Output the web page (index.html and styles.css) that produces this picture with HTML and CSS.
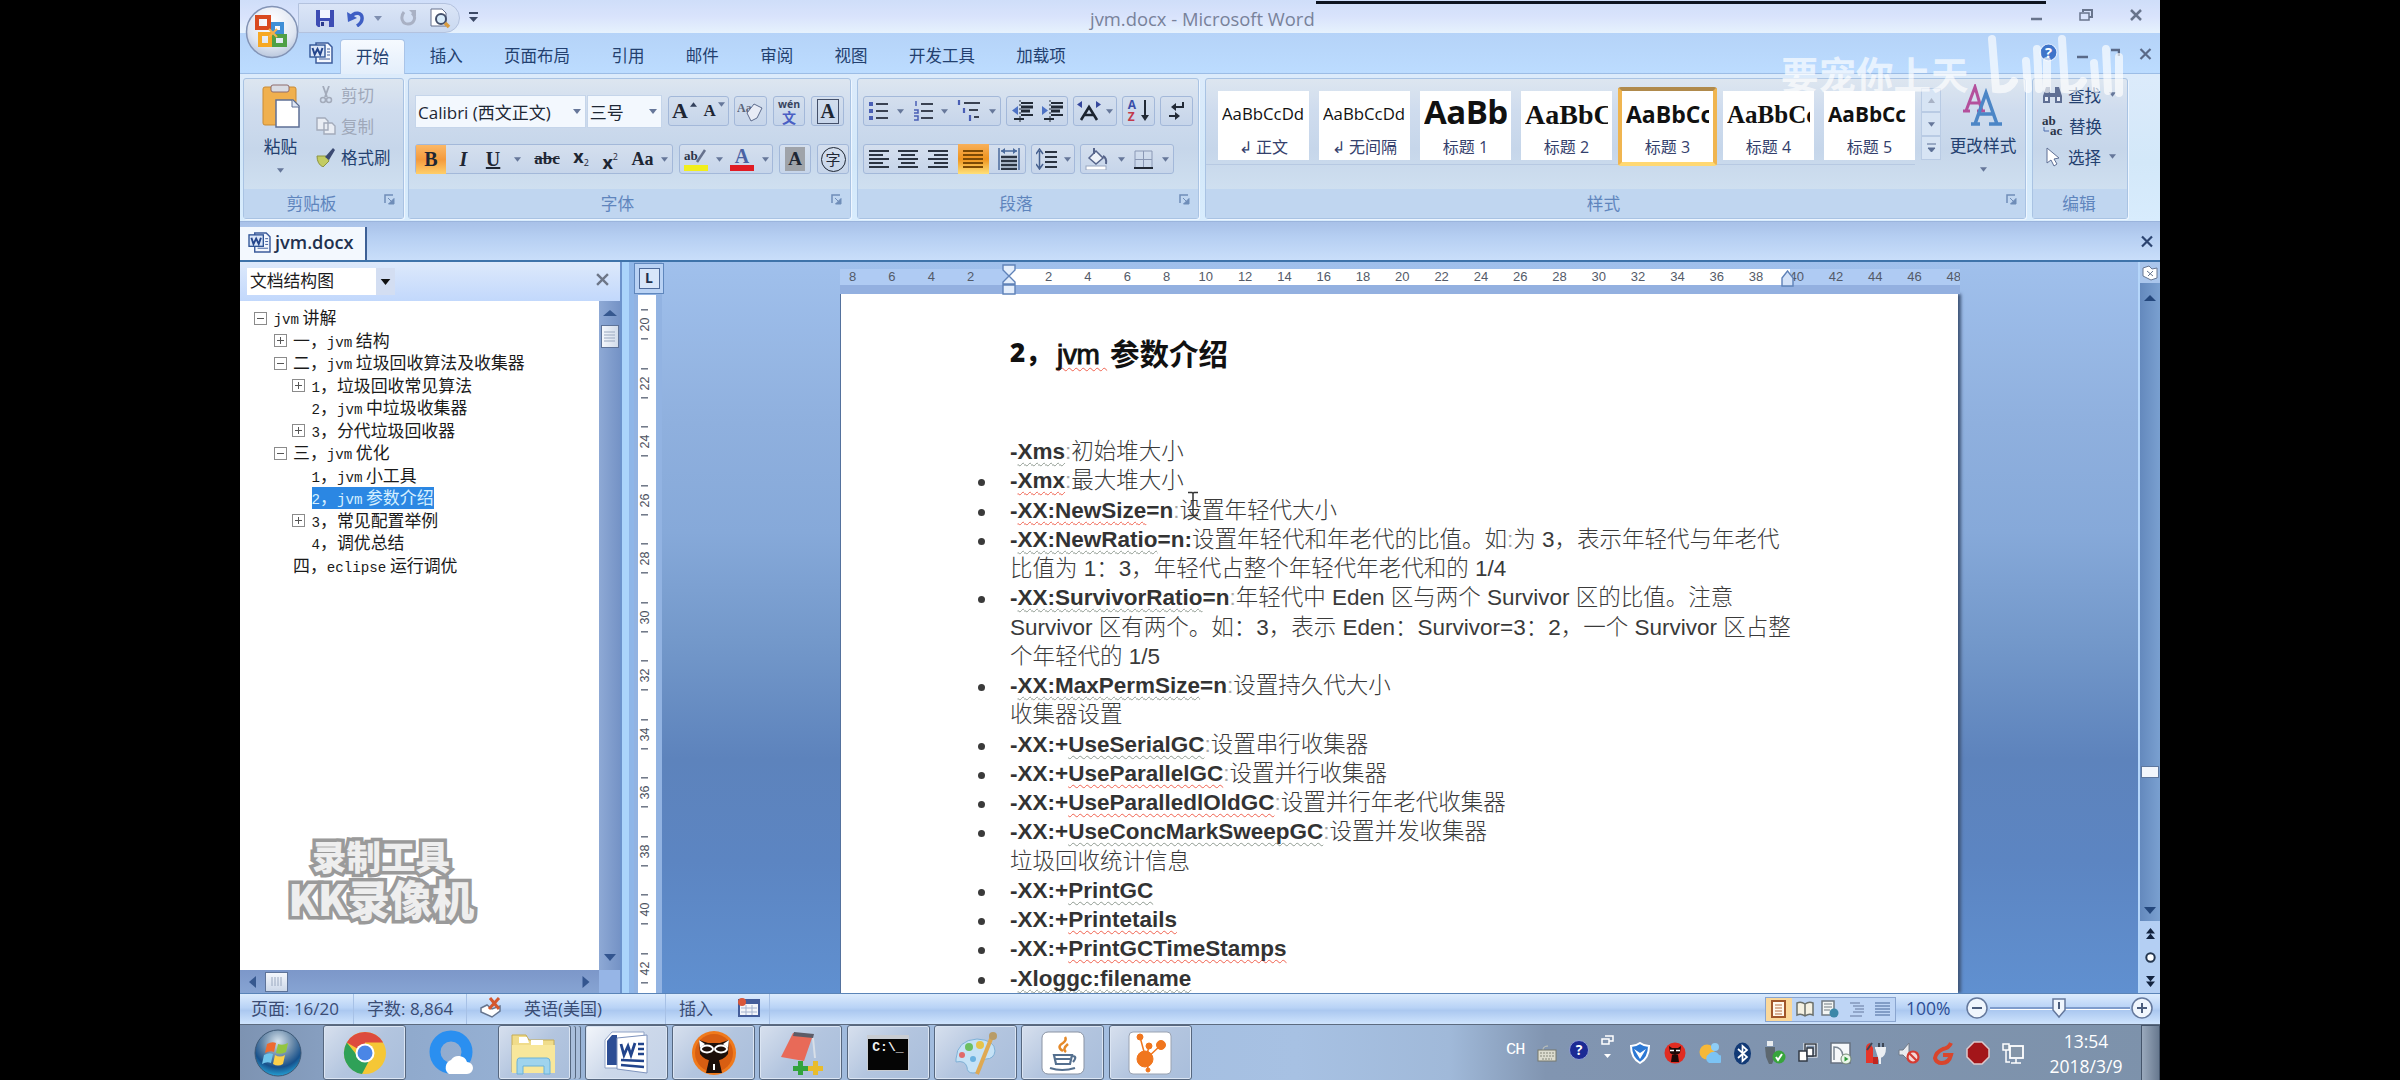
FILE: index.html
```html
<!DOCTYPE html>
<html lang="zh-CN">
<head>
<meta charset="utf-8">
<title>jvm.docx - Microsoft Word</title>
<link rel="stylesheet" href="styles.css">
</head>
<body>
<svg class="defs" width="0" height="0">
  <defs>
    <symbol id="wordfile" viewBox="0 0 24 22"><path d="M7 1h12l4 4v16H7z" fill="#f4f7fd" stroke="#3c5c9c" stroke-width="1.5"/><path d="M18 10h3M18 13h3M10 17h11M18 7h3" stroke="#3c5c9c"/><rect x="1" y="3" width="15" height="12" fill="#dbe6f8" stroke="#2f5496" stroke-width="1.4"/><path d="M3.500 6l2.200 6.500L8.500 7l2.700 5.500L13.500 6" fill="none" stroke="#24458c" stroke-width="2"/></symbol>
    <symbol id="dn" viewBox="0 0 8 5"><path d="M0 0h8L4 5z" fill="currentColor"/></symbol>
    <symbol id="launch" viewBox="0 0 11 11"><path d="M1 9V1h8" fill="none" stroke="#6f8db8" stroke-width="1.500"/><path d="M4 4l4 4M10 4.500V10H4.500z" fill="#6f8db8" stroke="#6f8db8"/></symbol>
    <radialGradient id="gOrb" cx=".5" cy=".25" r=".8"><stop offset="0" stop-color="#d6e3ee"/><stop offset=".4" stop-color="#6c8cab"/><stop offset=".7" stop-color="#17518c"/><stop offset="1" stop-color="#28b4e6"/></radialGradient>
    <radialGradient id="gOff" cx=".5" cy=".3" r=".8"><stop offset="0" stop-color="#fff"/><stop offset=".6" stop-color="#dfe6f2"/><stop offset="1" stop-color="#a9b9d4"/></radialGradient>
  </defs>
</svg>
<div class="app">
  <header class="titlebar">
    <svg class="office" width="54" height="54" viewBox="0 0 54 54"><circle cx="27" cy="27" r="25.500" fill="url(#gOff)" stroke="#8293b5" stroke-width="1.500"/><g fill="none" stroke-width="4"><rect x="12" y="12" width="12" height="11" stroke="#d94a1e"/><rect x="28" y="19" width="9" height="8" stroke="#3f8fd6"/><rect x="15" y="29" width="10" height="11" stroke="#f7a823"/><rect x="29" y="31" width="11" height="9" stroke="#4fa046"/></g><path d="M24 24l8 8M32 24l-8 8" stroke="#f4b04c" stroke-width="2"/></svg>
    <div class="qat">
      <svg width="20" height="19" viewBox="0 0 20 19"><path d="M1 1h18v17H3l-2-2z" fill="#3e4db4"/><rect x="5" y="1" width="10" height="8" fill="#f2f5ff"/><rect x="5" y="12" width="9" height="6" fill="#cdd5ee"/><rect x="6" y="13" width="3" height="4" fill="#2c3a8c"/></svg>
      <svg width="18" height="18" viewBox="0 0 18 18"><path d="M3 9C7 2 16 3 15 10c0 3-2 5-5 7" fill="none" stroke="#3f5fc4" stroke-width="3.500"/><path d="M0 3l1 10 9-4z" fill="#3f5fc4"/></svg>
      <svg class="q-arrow" width="8" height="5"><use href="#dn"/></svg>
      <svg width="17" height="18" viewBox="0 0 17 18"><path d="M4 3c-4 5-2 12 4 12s9-7 4-11" fill="none" stroke="#a9b1c4" stroke-width="3"/><path d="M9 1h7v7z" fill="#a9b1c4"/></svg>
      <svg width="23" height="22" viewBox="0 0 23 22"><path d="M2 2h11l4 4v13H2z" fill="#fff" stroke="#66718c"/><circle cx="12" cy="12" r="5" fill="#d9ecfa" stroke="#44506b" stroke-width="2"/><path d="M16 16l4 4" stroke="#d99b3e" stroke-width="3.500"/></svg>
    </div>
    <svg class="qmore" width="9" height="11" viewBox="0 0 9 11"><path d="M0 1h9" stroke="#3c4a66" stroke-width="2"/><path d="M0 5h9l-4.500 5z" fill="#3c4a66"/></svg>
    <div class="wintitle">jvm.docx - Microsoft Word</div>
    <div class="blackline"></div>
    <div class="winbtns">
      <svg width="11" height="12"><path d="M0 10h11" stroke="#68748c" stroke-width="2.500"/></svg>
      <svg width="14" height="12" viewBox="0 0 14 12"><path d="M4 3V1h9v7h-3" fill="none" stroke="#68748c" stroke-width="2"/><rect x="1" y="4" width="9" height="7" fill="none" stroke="#68748c" stroke-width="1.500"/></svg>
      <svg width="12" height="12" viewBox="0 0 12 12"><path d="M1 1l10 10M11 1L1 11" stroke="#68748c" stroke-width="2.500"/></svg>
    </div>
  </header>

  <nav class="tabs">
    <svg class="tabico" width="24" height="22"><use href="#wordfile"/></svg>
    <span class="tab on">开始</span><span class="tab">插入</span><span class="tab">页面布局</span><span class="tab">引用</span><span class="tab">邮件</span><span class="tab">审阅</span><span class="tab">视图</span><span class="tab">开发工具</span><span class="tab">加载项</span>
    <div class="docbtns">
      <svg width="19" height="19" viewBox="0 0 18 18"><circle cx="9" cy="9" r="8" fill="#3f74c9" stroke="#e6f0ff"/><text x="9" y="14" text-anchor="middle" class="qmark">?</text></svg>
      <svg width="11" height="12"><path d="M0 9h11" stroke="#5a6a88" stroke-width="2.500"/></svg>
      <svg width="13" height="12" viewBox="0 0 13 12"><path d="M4 2h8v6" fill="none" stroke="#5a6a88" stroke-width="2.500"/></svg>
      <svg width="13" height="12" viewBox="0 0 12 12"><path d="M1 1l10 10M11 1L1 11" stroke="#5a6a88" stroke-width="2.200"/></svg>
    </div>
  </nav>
  <div class="bili">
    <span>要宠你上天</span>
    <svg width="150" height="66" viewBox="0 0 150 66"><g fill="none" stroke="#fff" stroke-width="8" stroke-linecap="round"><path d="M6 6l4 50q13 2 18-8"/><path d="M40 28l2 28M51 16l2 40M61 28v28"/><path d="M76 6l3 50q12 2 18-8"/><path d="M108 30l2 26M120 16l2 42M133 24v36"/></g></svg>
  </div>

  <section class="ribbon">
    <div class="group g-clip">
      <div class="body">
        <div class="paste">
          <svg width="38" height="45" viewBox="0 0 38 45"><rect x="1" y="4" width="33" height="38" rx="2" fill="#f0b04e" stroke="#c98b34"/><rect x="9" y="2" width="18" height="7" rx="2" fill="#d9dce4" stroke="#8f6c6c"/><path d="M14 17h17l6 6v21H14z" fill="#fff" stroke="#5d6f95" stroke-width="1.500"/><path d="M30 17v7h7" fill="#dfe7f5" stroke="#5d6f95"/></svg>
          <span>粘贴</span><svg width="7" height="5"><use href="#dn"/></svg>
        </div>
        <div class="cliplist">
          <div class="dis"><svg width="20" height="18" viewBox="0 0 20 18"><path d="M7 0l4 11M13 0L9 11" stroke="#a3abba" stroke-width="1.800"/><circle cx="7" cy="14" r="2.500" fill="none" stroke="#a3abba" stroke-width="1.500"/><circle cx="13" cy="14" r="2.500" fill="none" stroke="#a3abba" stroke-width="1.500"/></svg>剪切</div>
          <div class="dis"><svg width="20" height="18" viewBox="0 0 20 18"><path d="M1 1h8l3 3v9H1zM8 6h8l3 3v8H8z" fill="#e9edf4" stroke="#a3abba" stroke-width="1.400"/></svg>复制</div>
          <div><svg width="20" height="20" viewBox="0 0 20 20"><path d="M1 9l9 0 3 5-6 6q-6-3-6-11z" fill="#c3cc62" stroke="#8d9440"/><path d="M9 10l8-9 2 2-6 10z" fill="#3b4a72"/></svg>格式刷</div>
        </div>
      </div>
      <footer><span>剪贴板</span><svg width="11" height="11"><use href="#launch"/></svg></footer>
    </div>

    <div class="group g-font">
      <div class="body rows">
        <div class="row r1">
          <div class="combo c-name">Calibri (西文正文)<svg width="8" height="5"><use href="#dn"/></svg></div>
          <div class="combo c-size">三号<svg width="8" height="5"><use href="#dn"/></svg></div>
          <div class="box bx61"><b class="ser s23">A</b><svg class="tri" width="7" height="5" viewBox="0 0 8 5"><path d="M0 5h8L4 0z" fill="#33415c"/></svg><b class="ser s18">A</b><svg class="tri" width="7" height="5"><use href="#dn"/></svg></div>
          <div class="box bx33"><svg width="27" height="24" viewBox="0 0 27 24"><text x="0" y="13" class="mini">Aa</text><path d="M10 14l7-9 8 4-5 10-6 3z" fill="#e8ecf6" stroke="#5d6b8c"/></svg></div>
          <div class="box bx33"><div class="wen"><span>wén</span><span>文</span></div></div>
          <div class="box bx33 last"><b class="ser framed">A</b></div>
        </div>
        <div class="row r2">
          <div class="box bx257">
            <b class="ser bold-on">B</b><i class="ser it">I</i><u class="ser un">U</u><svg width="7" height="5"><use href="#dn"/></svg><s class="ser">abc</s><b class="sub">x<small>2</small></b><b class="sup">x<small>2</small></b><b class="ser aa">Aa</b><svg width="7" height="5"><use href="#dn"/></svg>
          </div>
          <div class="box bx93">
            <svg width="26" height="24" viewBox="0 0 26 24"><rect x="1" y="18" width="24" height="6" fill="#f1ee1c"/><text x="1" y="13" class="mini dk">ab</text><path d="M14 15l8-12" stroke="#66718c" stroke-width="2.500"/></svg><svg width="7" height="5"><use href="#dn"/></svg>
            <svg width="26" height="24" viewBox="0 0 26 24"><rect x="1" y="18" width="24" height="6" fill="#e01b24"/><text x="13" y="16" text-anchor="middle" class="colA">A</text></svg><svg width="7" height="5"><use href="#dn"/></svg>
          </div>
          <div class="box bx33"><b class="ser shaded">A</b></div>
          <div class="box bx33 last"><span class="circ">字</span></div>
        </div>
      </div>
      <footer><span>字体</span><svg width="11" height="11"><use href="#launch"/></svg></footer>
    </div>

    <div class="group g-para">
      <div class="body rows">
        <div class="row r1">
          <div class="box bx138">
            <svg width="20" height="20" viewBox="0 0 20 20"><path d="M8 3h12M8 10h12M8 17h12" stroke="#3a4252" stroke-width="2.200"/><path d="M1 3h4M1 10h4M1 17h4" stroke="#4a5fb5" stroke-width="4"/></svg><svg width="7" height="5"><use href="#dn"/></svg>
            <svg width="20" height="20" viewBox="0 0 20 20"><path d="M8 3h12M8 10h12M8 17h12" stroke="#3a4252" stroke-width="2.200"/><path d="M3 0v5M1 9h4v3h-4M1 15h4v4H1" stroke="#4a5fb5" stroke-width="1.500" fill="none"/></svg><svg width="7" height="5"><use href="#dn"/></svg>
            <svg width="23" height="22" viewBox="0 0 23 22"><path d="M7 3h16M12 10h9M17 17h5" stroke="#3a4252" stroke-width="2.200"/><path d="M2 0v5M7 8v5M13 15v6" stroke="#4a5fb5" stroke-width="2.200"/></svg><svg width="7" height="5"><use href="#dn"/></svg>
          </div>
          <div class="box bx62">
            <svg width="21" height="22" viewBox="0 0 21 22"><path d="M9 3h12M9 15h12M2 19h10" stroke="#222a36" stroke-width="2"/><path d="M9 7h12M9 11h9" stroke="#222a36" stroke-width="3"/><path d="M8 0v22" stroke="#222a36" stroke-dasharray="2 2"/><path d="M6 6v9l-6-4.500z" fill="#4d72c4"/></svg>
            <svg width="21" height="22" viewBox="0 0 21 22"><path d="M9 3h12M9 15h12M2 19h10" stroke="#222a36" stroke-width="2"/><path d="M9 7h12M9 11h9" stroke="#222a36" stroke-width="3"/><path d="M8 0v22" stroke="#222a36" stroke-dasharray="2 2"/><path d="M0 6v9l6-4.500z" fill="#4d72c4"/></svg>
          </div>
          <div class="box bx44"><svg width="24" height="20" viewBox="0 0 24 20"><path d="M4 19l8-13 8 13M7 14h10" stroke="#1c2430" stroke-width="2.600" fill="none"/><path d="M5 0v7L0 3.500zM19 0v7l5-3.500z" fill="#35479c"/></svg><svg width="7" height="5"><use href="#dn"/></svg></div>
          <div class="box bx33"><div class="azs"><span>A</span><span>Z</span></div><svg width="8" height="22" viewBox="0 0 8 22"><path d="M4 0v17" stroke="#222a36" stroke-width="2"/><path d="M0 15h8l-4 6z" fill="#222a36"/></svg></div>
          <div class="box bx33"><svg width="16" height="20" viewBox="0 0 16 20"><path d="M14 1v5H6M0 15h8" fill="none" stroke="#222a36" stroke-width="2"/><path d="M7 2v8L2 6zM6 11v8l5-4z" fill="#222a36"/></svg></div>
        </div>
        <div class="row r2">
          <div class="box bx163">
            <svg width="20" height="18" viewBox="0 0 20 18"><path d="M0 1h20M0 5h14M0 9h20M0 13h14M0 17h20" stroke="#2b3442" stroke-width="2"/></svg>
            <svg width="20" height="18" viewBox="0 0 20 18"><path d="M0 1h20M3 5h14M0 9h20M3 13h14M0 17h20" stroke="#2b3442" stroke-width="2"/></svg>
            <svg width="20" height="18" viewBox="0 0 20 18"><path d="M0 1h20M6 5h14M0 9h20M6 13h14M0 17h20" stroke="#2b3442" stroke-width="2"/></svg>
            <span class="just"><svg width="20" height="18" viewBox="0 0 20 18"><path d="M0 1h20M0 5h20M0 9h20M0 13h20M0 17h20" stroke="#7c4a05" stroke-width="2"/></svg></span>
            <svg width="22" height="22" viewBox="0 0 22 22"><path d="M1 0v22M21 0v22M3 3h16" stroke="#4a6a9c" stroke-width="1.500"/><path d="M3 3l4-3v6zM19 3l-4-3v6z" fill="#4a6a9c"/><path d="M3 9h16M3 13h16M3 17h16M3 21h16" stroke="#2b3442" stroke-width="2.400"/></svg>
          </div>
          <div class="box bx44"><svg width="21" height="22" viewBox="0 0 21 22"><path d="M9 4h12M9 9h12M9 14h12M9 19h12" stroke="#2b3442" stroke-width="2"/><path d="M3.500 3v17M0 6l3.500-5L7 6M0 16l3.500 5L7 16" fill="none" stroke="#46608f" stroke-width="1.500"/></svg><svg width="7" height="5"><use href="#dn"/></svg></div>
          <div class="box bx94">
            <svg width="24" height="22" viewBox="0 0 24 22"><path d="M4 10l7-7 7 7-7 6z" fill="#eef2f8" stroke="#56648a" stroke-width="1.500"/><path d="M9 6V0M18 8q4 2 3 8" stroke="#56648a" fill="none" stroke-width="2"/><rect x="1" y="18" width="20" height="4" fill="#fff" stroke="#98a6c0"/></svg><svg width="7" height="5"><use href="#dn"/></svg>
            <svg width="19" height="19" viewBox="0 0 19 19"><path d="M1 1h17v17M1 1v17M9.500 1v17M1 9.500h17" fill="none" stroke="#8a98b5"/><path d="M0 18h19" stroke="#222a36" stroke-width="2"/></svg><svg width="7" height="5"><use href="#dn"/></svg>
          </div>
        </div>
      </div>
      <footer><span>段落</span><svg width="11" height="11"><use href="#launch"/></svg></footer>
    </div>

    <div class="group g-style">
      <div class="body">
        <div class="gallery">
          <div class="st"><span class="pv p0">AaBbCcDd</span><em>↲ 正文</em></div>
          <div class="st"><span class="pv p0">AaBbCcDd</span><em>↲ 无间隔</em></div>
          <div class="st"><span class="pv p1">AaBb</span><em>标题 1</em></div>
          <div class="st"><span class="pv p2">AaBbC</span><em>标题 2</em></div>
          <div class="st sel"><span class="pv p3">AaBbCc</span><em>标题 3</em></div>
          <div class="st"><span class="pv p4">AaBbCc</span><em>标题 4</em></div>
          <div class="st"><span class="pv p5">AaBbCc</span><em>标题 5</em></div>
        </div>
        <div class="gscroll"><span><svg width="7" height="5" viewBox="0 0 7 5"><path d="M0 5h7L3.500 0z" fill="#a9b3c6"/></svg></span><span><svg width="7" height="5"><use href="#dn"/></svg></span><span><svg width="9" height="10" viewBox="0 0 9 10"><path d="M0 1h9M1 5h7L4.500 9z" stroke="#5b6f95" fill="#5b6f95"/></svg></span></div>
        <div class="change">
          <svg width="42" height="42" viewBox="0 0 42 42"><path d="M1 27h7M15 27h8M4 27L13 3l7 24M7 19h10" fill="none" stroke="#b4509c" stroke-width="3"/><path d="M9 40h9M27 40h13M13 40L24 9l11 31M17 30h14" fill="none" stroke="#4c86c6" stroke-width="3.500"/></svg>
          <span>更改样式</span><svg width="7" height="5"><use href="#dn"/></svg>
        </div>
      </div>
      <footer><span>样式</span><svg width="11" height="11"><use href="#launch"/></svg></footer>
    </div>

    <div class="group g-edit">
      <div class="body cliplist">
        <div><svg width="21" height="18" viewBox="0 0 21 18"><path d="M4 1h4v6h5V1h4l3 9v7h-7v-6H8v6H1v-7z" fill="#5f6f94"/><path d="M3 11h3v4H3zM15 11h3v4h-3z" fill="#e6ecf8"/></svg>查找<svg class="ar" width="7" height="5"><use href="#dn"/></svg></div>
        <div><svg width="22" height="22" viewBox="0 0 22 22"><text x="0" y="10" class="mini dk">ab</text><text x="8" y="20" class="mini dk">ac</text><path d="M2 12v4h5" fill="none" stroke="#4d6cae"/></svg>替换</div>
        <div><svg width="21" height="20" viewBox="0 0 21 20"><path d="M5 1v15l4-3 3 6 3-2-3-5 5-1z" fill="#fff" stroke="#5f6f94"/></svg>选择<svg class="ar" width="7" height="5"><use href="#dn"/></svg></div>
      </div>
      <footer><span>编辑</span></footer>
    </div>
  </section>

  <div class="doctabs">
    <div class="doctab"><svg width="23" height="21"><use href="#wordfile"/></svg>jvm.docx</div>
    <svg class="closer" width="12" height="13" viewBox="0 0 12 12"><path d="M1 1l10 10M11 1L1 11" stroke="#2c4470" stroke-width="2.200"/></svg>
  </div>

  <main class="work">
    <aside class="map">
      <div class="maphead"><div class="mapsel">文档结构图</div><div class="mapdd"><svg width="11" height="6"><use href="#dn"/></svg></div><svg class="mapx" width="13" height="13" viewBox="0 0 12 12"><path d="M1 1l10 10M11 1L1 11" stroke="#6d7688" stroke-width="2.200"/></svg></div>
      <div class="mapmid">
        <ul class="tree">
          <li class="l0"><i class="bx"></i><span><tt>jvm </tt>讲解</span></li>
          <li class="l1"><i class="bx plus"></i><span>一，<tt>jvm </tt>结构</span></li>
          <li class="l1"><i class="bx"></i><span>二，<tt>jvm </tt>垃圾回收算法及收集器</span></li>
          <li class="l2"><i class="bx plus"></i><span><tt>1</tt>，垃圾回收常见算法</span></li>
          <li class="l2"><i class="no"></i><span><tt>2</tt>，<tt>jvm </tt>中垃圾收集器</span></li>
          <li class="l2"><i class="bx plus"></i><span><tt>3</tt>，分代垃圾回收器</span></li>
          <li class="l1"><i class="bx"></i><span>三，<tt>jvm </tt>优化</span></li>
          <li class="l2"><i class="no"></i><span><tt>1</tt>，<tt>jvm </tt>小工具</span></li>
          <li class="l2"><i class="no"></i><span class="cur"><tt>2</tt>，<tt>jvm </tt>参数介绍</span></li>
          <li class="l2"><i class="bx plus"></i><span><tt>3</tt>，常见配置举例</span></li>
          <li class="l2"><i class="no"></i><span><tt>4</tt>，调优总结</span></li>
          <li class="l1"><i class="no"></i><span>四，<tt>eclipse </tt>运行调优</span></li>
        </ul>
        <div class="vsb"><svg class="up" width="14" height="8" viewBox="0 0 14 8"><path d="M0 7h14L7 1z" fill="#36588f"/></svg><i class="thumb"><svg width="11" height="11" viewBox="0 0 11 11"><path d="M0 1h11M0 4h11M0 7h11M0 10h11" stroke="#9aa8bf"/></svg></i><svg class="down" width="12" height="8" viewBox="0 0 12 8"><path d="M0 1h12L6 8z" fill="#33558f"/></svg></div>
        <div class="brand"><b>录制工具</b><b class="kk">KK录像机</b></div>
      </div>
      <div class="hsb"><svg width="7" height="12" viewBox="0 0 7 12"><path d="M7 0v12L0 6z" fill="#36588f"/></svg><i class="hthumb"><svg width="12" height="9" viewBox="0 0 12 9"><path d="M1 0v9M4 0v9M7 0v9M10 0v9" stroke="#9aa8bf"/></svg></i><svg class="hr" width="8" height="12" viewBox="0 0 7 12"><path d="M0 0v12l7-6z" fill="#33558f"/></svg><i class="corner"></i></div>
    </aside>
    <div class="split"></div>
    <div class="vruler">
      <div class="tabstop"><i>L</i></div>
      <div class="vnums"><span>20</span><span>22</span><span>24</span><span>26</span><span>28</span><span>30</span><span>32</span><span>34</span><span>36</span><span>38</span><span>40</span><span>42</span></div>
    </div>
    <div class="canvas">
      <div class="hruler">
        <div class="hm hl"><span>8</span><span>6</span><span>4</span><span>2</span></div>
        <div class="hw"><span>2</span><span>4</span><span>6</span><span>8</span><span>10</span><span>12</span><span>14</span><span>16</span><span>18</span><span>20</span><span>22</span><span>24</span><span>26</span><span>28</span><span>30</span><span>32</span><span>34</span><span>36</span><span>38</span></div>
        <div class="hm hrr"><span>40</span><span>42</span><span>44</span><span>46</span><span>48</span></div>
        <svg class="indent" width="14" height="32" viewBox="0 0 14 32"><path d="M1 1h12v5l-6 6-6-6zM7 12l6 6v2H1v-2zM1 21h12v9H1z" fill="#e4eefc" stroke="#5f82b8" stroke-width="1.400"/></svg>
        <svg class="rindent" width="13" height="17" viewBox="0 0 13 17"><path d="M6.500 1L12 8v8H1V8z" fill="#d3e2f8" stroke="#5f82b8" stroke-width="1.400"/></svg>
      </div>
      <article class="page">
        <h1><b>2，</b><u class="red">jvm </u>参数介绍</h1>
        <div class="ln"><b>-<u>Xms</u></b><q>:</q>初始堆大小</div>
        <div class="ln li"><b>-<u class="red">Xmx</u></b><q>:</q>最大堆大小</div>
        <div class="ln li"><b>-<u class="red">XX:NewSize</u>=n</b><q>:</q>设置年轻代大小</div>
        <div class="ln li"><b>-<u>XX:NewRatio</u>=n:</b>设置年轻代和年老代的比值。如<q>:</q>为 3，表示年轻代与年老代</div>
        <div class="ln">比值为 1：3，年轻代占整个年轻代年老代和的 1/4</div>
        <div class="ln li"><b>-<u>XX:SurvivorRatio</u>=n</b><q>:</q>年轻代中 Eden 区与两个 Survivor 区的比值。注意</div>
        <div class="ln">Survivor 区有两个。如：3，表示 Eden：Survivor=3：2，一个 Survivor 区占整</div>
        <div class="ln">个年轻代的 1/5</div>
        <div class="ln li"><b>-<u>XX:MaxPermSize</u>=n</b><q>:</q>设置持久代大小</div>
        <div class="ln">收集器设置</div>
        <div class="ln li"><b>-XX:+<u>UseSerialGC</u></b><q>:</q>设置串行收集器</div>
        <div class="ln li"><b>-XX:+<u class="red">UseParallelGC</u></b><q>:</q>设置并行收集器</div>
        <div class="ln li"><b>-XX:+<u class="red">UseParalledlOldGC</u></b><q>:</q>设置并行年老代收集器</div>
        <div class="ln li"><b>-XX:+<u>UseConcMarkSweepGC</u></b><q>:</q>设置并发收集器</div>
        <div class="ln">垃圾回收统计信息</div>
        <div class="ln li"><b>-XX:+<u>PrintGC</u></b></div>
        <div class="ln li"><b>-XX:+<u class="red">Printetails</u></b></div>
        <div class="ln li"><b>-XX:+<u class="red">PrintGCTimeStamps</u></b></div>
        <div class="ln li"><b>-<u>Xloggc:filename</u></b></div>
      </article>
      <svg class="ibeam" width="10" height="26" viewBox="0 0 10 26"><path d="M0 1.500h4l1 1 1-1h4M5 2v22M0 24.500h4l1-1 1 1h4" fill="none" stroke="#333" stroke-width="1.500"/></svg>
    </div>
    <div class="rsb">
      <i class="rtop"><svg width="16" height="16" viewBox="0 0 16 16"><path d="M1 3l6-2 3 3 5-1v10l-6 2-8-4z" fill="#fff" stroke="#667692"/><path d="M5 6l6 5M11 6l-5 5" stroke="#667692"/></svg></i>
      <div class="rtrack"><svg width="12" height="8" viewBox="0 0 12 8"><path d="M0 7h12L6 1z" fill="#24477c"/></svg><i class="rthumb"></i><svg width="12" height="8" viewBox="0 0 12 8"><path d="M0 1h12L6 8z" fill="#24477c"/></svg></div>
      <div class="rnav">
        <svg width="9" height="11" viewBox="0 0 9 11"><path d="M0 5.500L4.500 0 9 5.500zM0 11l4.500-5.500L9 11z" fill="#13233f"/></svg>
        <svg width="11" height="11" viewBox="0 0 11 11"><circle cx="5.500" cy="5.500" r="4.200" fill="#fff" stroke="#24364f" stroke-width="2"/></svg>
        <svg width="9" height="11" viewBox="0 0 9 11"><path d="M0 0h9L4.500 5.500zM0 5.500h9L4.500 11z" fill="#13233f"/></svg>
      </div>
    </div>
  </main>

  <div class="status">
    <span class="s1">页面: 16/20</span><span class="s2">字数: 8,864</span>
    <span class="s3"><svg width="23" height="21" viewBox="0 0 23 21"><path d="M1 11l6-3 5 4 8-3v5l-8 6L1 15z" fill="#fff" stroke="#66758f" stroke-width="1.500"/><path d="M10 1l9 11M19 1L9 12" stroke="#d4572e" stroke-width="3"/></svg><em>英语(美国)</em></span>
    <span class="s4">插入<svg width="23" height="19" viewBox="0 0 23 19"><rect x="2" y="2" width="20" height="16" fill="#f3f5fa" stroke="#445d9a" stroke-width="2"/><path d="M2 4h20" stroke="#445d9a" stroke-width="4"/><path d="M4 10h16M4 14h16M9 7v10M15 7v10" stroke="#a5b3cf"/><circle cx="5" cy="4" r="4" fill="#d9573a"/></svg></span>
    <div class="views">
      <i class="von"><svg width="15" height="18" viewBox="0 0 15 18"><rect x="1" y="1" width="13" height="16" fill="#fff8ec" stroke="#a1562a" stroke-width="2"/><path d="M4 5h7M4 8h7M4 11h7M4 14h7" stroke="#b56c42"/></svg></i>
      <i><svg width="18" height="17" viewBox="0 0 18 17"><path d="M9 3Q5 0 1 2v12q4-2 8 1 4-3 8-1V2q-4-2-8 1v12" fill="#f5f1e2" stroke="#6b6f6a" stroke-width="1.500"/></svg></i>
      <i><svg width="18" height="18" viewBox="0 0 18 18"><rect x="1" y="1" width="12" height="14" fill="#f4f6f4" stroke="#707a82" stroke-width="1.500"/><path d="M3 4h8M3 7h8M3 10h6" stroke="#707a82"/><circle cx="13" cy="13" r="4.500" fill="#3c87a8"/></svg></i>
      <i><svg width="15" height="15" viewBox="0 0 15 15"><path d="M1 1h10M4 4h11M6 7h9M4 10h11M1 14h12" stroke="#8296bb" stroke-width="1.500"/></svg></i>
      <i><svg width="15" height="15" viewBox="0 0 15 15"><path d="M0 1h15M0 4h15M0 7h15M0 10h15M0 13h15" stroke="#6f8ab6" stroke-width="1.700"/></svg></i>
    </div>
    <span class="pct">100%</span>
    <svg class="zoomer" width="188" height="24" viewBox="0 0 188 24"><path d="M24 12h140" stroke="#7e9ccc" stroke-width="2"/><path d="M24 13.500h140" stroke="#fff"/><g fill="#f0f6fd" stroke="#64789c" stroke-width="1.500"><circle cx="11" cy="12" r="10"/><circle cx="176" cy="12" r="10"/><path d="M87 3h12v11l-6 7-6-7z"/></g><path d="M6 12h10M171 12h10M176 7v10M93 6v7" stroke="#4a5c7c" stroke-width="2"/></svg>
  </div>

  <div class="taskbar">
    <svg class="orb" width="48" height="48" viewBox="0 0 48 48"><circle cx="24" cy="24" r="23" fill="url(#gOrb)" stroke="#3d5875"/><path d="M13 15q5-3 9-1l-2 9q-4-2-9 1z" fill="#ee6a2f"/><path d="M24 15q5 2 10-1l-2 9q-5 3-10 1z" fill="#93c540"/><path d="M10 26q5-3 9-1l-2 9q-4-2-9 1z" fill="#6fc5ec"/><path d="M21 26q5 3 10 0l-2 9q-5 3-10 0z" fill="#fbd04a"/></svg>
    <div class="tb"><svg width="44" height="44" viewBox="0 0 44 44"><circle cx="22" cy="22" r="21" fill="#f5c736"/><path d="M22 22L3.800 11.500A21 21 0 0 1 40.200 11.500H22z" fill="#dd4b3e"/><path d="M3.800 11.500A21 21 0 0 0 19 43l9-17-15-3z" fill="#2fa158"/><circle cx="22" cy="22" r="9.500" fill="#fff"/><circle cx="22" cy="22" r="7.500" fill="#4a86e6"/></svg></div>
    <div class="tb bare"><svg width="46" height="46" viewBox="0 0 46 46"><circle cx="22" cy="22" r="16" fill="none" stroke="#2a8ff0" stroke-width="11"/><path d="M20 44a8 8 0 0 1 2-14 9 9 0 0 1 16 2 6 6 0 0 1 0 12z" fill="#fff"/></svg></div>
    <div class="tb stack"><svg width="46" height="44" viewBox="0 0 46 44"><path d="M1 4h14l3 5h25v32H1z" fill="#f0dc8a" stroke="#c5ac55"/><path d="M8 6h8l2 6H8zM20 9h12v5H20z" fill="#fff"/><path d="M1 14h43v28H1z" fill="#f8e79b"/><path d="M8 27h28q3 0 3 4v12h-6v-8H12v8H6V31q0-4 2-4z" fill="#9fd4ee" stroke="#6bb2d8"/></svg></div>
    <div class="tb hot"><svg width="44" height="44" viewBox="0 0 44 44"><path d="M8 1h32v36H1V9z" fill="#fff" stroke="#90a3c6"/><path d="M8 4h5v30H3V10z" fill="#2c4d94"/><path d="M13 7l30-3v38l-30-4z" fill="#fff" stroke="#7e93bd"/><path d="M17 13l3 11 4-9 3 9 4-12" fill="none" stroke="#21448c" stroke-width="2.800"/><path d="M34 13h6M34 18h6M34 23h6M17 29l23 1M17 34l23 2" stroke="#21448c" stroke-width="2.500"/></svg></div>
    <div class="tb"><svg width="46" height="46" viewBox="0 0 46 46"><circle cx="23" cy="23" r="22" fill="#f07a1c"/><circle cx="23" cy="23" r="19" fill="#d85e12"/><path d="M8 10l9 3h12l9-3-1 14q-5 7-14 7T9 24z" fill="#1c0f0a"/><path d="M8 10l6 4-5 4zM38 10l-6 4 5 4z" fill="#fff"/><path d="M18 30h10l3 13H15z" fill="#1c0f0a"/><g fill="none" stroke="#fff" stroke-width="2"><ellipse cx="16" cy="19" rx="6" ry="3.500"/><ellipse cx="30" cy="19" rx="6" ry="3.500"/><path d="M23 34v6"/></g></svg></div>
    <div class="tb"><svg width="46" height="46" viewBox="0 0 46 46"><path d="M15 3l20 2-9 26-23-4z" fill="#e86a58"/><path d="M16 2l20 2-1 4-20-2z" fill="#5c5c68"/><path d="M35 8l2 20" stroke="#d8dfe8" stroke-width="2"/><path d="M20 31h5v5h5v5h-5v4h-5v-4h-5v-5h5z" fill="#32a43c"/><path d="M35 31h5v5h5v5h-5v4h-5v-4h-5v-5h5z" fill="#e8bc2c"/></svg></div>
    <div class="tb"><div class="cmd">C:\_</div></div>
    <div class="tb"><svg width="46" height="44" viewBox="0 0 46 44"><path d="M3 28Q4 9 24 8q18 1 18 12-1 8-9 8-7 1-5 8 0 6-8 6-6 0-6-6-2-7-11-5z" fill="#c5e2f6" stroke="#7fb0d6"/><circle cx="9" cy="24" r="3" fill="#e06a6a"/><circle cx="16" cy="16" r="4" fill="#6cbf62"/><circle cx="27" cy="14" r="4" fill="#e6c34a"/><circle cx="20" cy="28" r="3" fill="#6ab2e0"/><path d="M40 3L24 43" stroke="#dfa952" stroke-width="4"/><circle cx="40" cy="5" r="4" fill="#b89c68"/></svg></div>
    <div class="tb"><svg width="44" height="44" viewBox="0 0 44 44"><rect x="1" y="1" width="42" height="42" rx="6" fill="#fff" stroke="#8a93a3"/><path d="M22 20q-7-4 0-8 4-3 2-6M25 21q-4-3 2-8" fill="none" stroke="#e58a2a" stroke-width="2.500"/><path d="M13 24h18l-2 9H15zM31 25q6 0 1 6M14 28h15M9 37q12 4 25 0" fill="none" stroke="#55708f" stroke-width="2.200"/></svg></div>
    <div class="tb"><svg width="44" height="44" viewBox="0 0 44 44"><rect x="1" y="1" width="42" height="42" rx="4" fill="#fff" stroke="#9aa3b2"/><g fill="#f0761e" stroke="#f0761e"><path d="M18 28L12 6M18 28l3-13M18 28l15-14M19 30l1 9" stroke-width="1.500"/><circle cx="17" cy="28" r="8"/><circle cx="12" cy="6" r="3"/><circle cx="21" cy="15" r="3"/><circle cx="33" cy="14" r="4.500"/><circle cx="20" cy="39" r="2"/></g></svg></div>
    <div class="tray">
      <span class="ch">CH</span>
      <svg width="20" height="18" viewBox="0 0 20 18"><path d="M6 6q0-4 5-4" fill="none" stroke="#c8c9bc"/><rect x="1" y="6" width="18" height="11" fill="#dcdccf" stroke="#76786d"/><path d="M3 9h14M3 12h14M5 15h10" stroke="#85877a" stroke-dasharray="2 1"/></svg>
      <svg class="help" width="20" height="21" viewBox="0 0 20 21"><circle cx="10" cy="10" r="9.500" fill="#1c2a94" stroke="#8e9cd0"/><text x="10" y="15" text-anchor="middle" class="qmark">?</text></svg>
      <svg class="opt" width="13" height="24" viewBox="0 0 13 24"><path d="M4 1h8v5H8M1 4h7v5H1z" fill="none" stroke="#fff" stroke-width="1.500"/><path d="M3 19h7l-3.500 4z" fill="#fff"/></svg>
      <svg width="22" height="22" viewBox="0 0 22 22"><path d="M2 4q5 0 9-3 4 3 9 3 0 12-9 17Q2 16 2 4z" fill="#2c78d4" stroke="#fff" stroke-width="2"/><path d="M5 7l6 4 6-4-6 10z" fill="#fff"/></svg>
      <svg width="22" height="22" viewBox="0 0 22 22"><circle cx="11" cy="11" r="10.500" fill="#e12c22"/><path d="M5 4l3 2h6l3-2-1 7q-5 4-10 0zM8 13h6l1 7H7z" fill="#1d0a08"/><path d="M6 8.500h4M12 8.500h4" stroke="#fff" stroke-width="1.500"/></svg>
      <svg width="22" height="22" viewBox="0 0 22 22"><circle cx="8" cy="10" r="7.500" fill="#f6b838"/><path d="M10 21a5 5 0 0 1 0-9 6 6 0 0 1 10 1 4 4 0 0 1-1 8z" fill="#7cc3f4"/><circle cx="16" cy="5" r="4" fill="#8ecdf6"/></svg>
      <svg width="17" height="23" viewBox="0 0 17 23"><ellipse cx="8.500" cy="11.500" rx="8.500" ry="11" fill="#123a76"/><path d="M4 7l9 8-4.500 4V4L13 8l-9 8" fill="none" stroke="#fff" stroke-width="1.700"/></svg>
      <svg width="22" height="24" viewBox="0 0 22 24"><rect x="3" y="0" width="6" height="5" fill="#e8ecef"/><path d="M1 6h10v10l-3 7H5l-3-7z" fill="#5d6870"/><circle cx="15" cy="16" r="6.500" fill="#38a53c"/><path d="M12 16l2 3 4-6" fill="none" stroke="#fff" stroke-width="2"/></svg>
      <svg width="20" height="20" viewBox="0 0 20 20"><path d="M7 1h11v12H7z" fill="none" stroke="#fff" stroke-width="3"/><path d="M7 1h11v12H7z" fill="none" stroke="#323a46" stroke-width="1.500"/><rect x="1" y="8" width="8" height="10" fill="#fff" stroke="#323a46" stroke-width="1.500"/><rect x="9" y="5" width="6" height="8" fill="#fff" stroke="#323a46" stroke-width="1.500"/></svg>
      <svg width="22" height="23" viewBox="0 0 22 23"><rect x="1" y="1" width="19" height="20" fill="#f6f8fa" stroke="#677180" stroke-width="1.500"/><path d="M4 18V5q8 0 9 9" fill="none" stroke="#7d8894" stroke-width="1.500"/><circle cx="16" cy="17" r="5" fill="#eaf6ea" stroke="#768a76"/><path d="M14.500 14.500v5l4-2.500z" fill="#2f9a3a"/></svg>
      <svg width="22" height="23" viewBox="0 0 22 23"><path d="M2 6q0-4 4-5l3 5v15H2z" fill="#e5352a"/><path d="M3 8l5-7M15 1v5M19 1v5" fill="none" stroke="#3d4654" stroke-width="2"/><path d="M11 6h10q0 8-5 9v7" fill="#eceff3" stroke="#eceff3" stroke-width="2"/><path d="M9 15h5v7H9z" fill="#bf2620"/></svg>
      <svg width="22" height="22" viewBox="0 0 22 22"><path d="M1 8h4l6-7v18l-6-6H1z" fill="#e8ebef" stroke="#707a88"/><circle cx="15" cy="15" r="5.500" fill="#f3d8d8" stroke="#d43c34" stroke-width="2.200"/><path d="M11 11l8 8" stroke="#d43c34" stroke-width="2.200"/></svg>
      <svg width="22" height="23" viewBox="0 0 22 23"><path d="M19 1q-2 5-8 6-7 3-8 9 1 5 7 5 7 0 9-8h-8" fill="none" stroke="#d8452c" stroke-width="4"/></svg>
      <svg width="24" height="24" viewBox="0 0 24 24"><path d="M8 1h8l7 7v8l-7 7H8l-7-7V8z" fill="#a3161a" stroke="#dcc9cc" stroke-width="1.500"/></svg>
      <svg width="22" height="22" viewBox="0 0 22 22"><rect x="8" y="4" width="13" height="12" fill="#8495a8" stroke="#fff" stroke-width="1.800"/><path d="M14 17v4M9 21h10M4 8v12h4" stroke="#fff" stroke-width="1.500" fill="none"/><rect x="1" y="2" width="6" height="6" fill="#8495a8" stroke="#fff" stroke-width="1.500"/></svg>
    </div>
    <div class="clock"><span>13:54</span><span>2018/3/9</span></div>
    <div class="peek"></div>
  </div>
</div>
</body>
</html>
```
FILE: styles.css
```css
* { box-sizing: border-box; }
body { margin: 0; background: #000; overflow: hidden; font-family: "Open Sans", "Noto Sans CJK SC", sans-serif; text-spacing-trim: space-all; }
svg { display: block; flex: none; }
em, i { font-style: normal; }
.defs { position: absolute; }
.app { position: relative; width: 1920px; height: 1080px; margin: 0 240px; overflow: hidden; display: flex; flex-direction: column; font-size: 17px; color: #23406f; background: #bbd9fc; }

/* title bar */
.titlebar { height: 33px; flex: none; display: flex; position: relative; background: linear-gradient(#cfdef9, #d9e3fc 50%, #e6f2fd); }
.office { position: absolute; left: 5px; top: 5px; z-index: 3; }
.qat { margin: 3px 0 0 58px; width: 162px; height: 30px; border-radius: 0 15px 15px 0; border: 1px solid #b3c2de; background: linear-gradient(#dbe5f7, #cad9f0); display: flex; align-items: center; padding-left: 16px; gap: 12px; }
.q-arrow { margin: 0 6px 0 -3px; color: #7f8fb0; }
.qmore { margin: 12px 0 0 9px; }
.wintitle { position: absolute; left: 0; right: 0; top: 6px; margin-left: 850px; font-size: 18.4px; line-height: 26px; color: #78829a; }
.blackline { position: absolute; left: 1076px; top: 1px; width: 730px; height: 3px; background: #0d1420; }
.winbtns { margin-left: auto; padding: 9px 18px 0 0; display: flex; gap: 37px; }

/* tab row */
.tabs { height: 41px; flex: none; display: flex; background: linear-gradient(#b5d3f8, #bcdcff); border-bottom: 1px solid #9cbde6; padding-left: 69px; }
.tabico { margin: 9px 7px 0 0; }
.tab { padding: 0 20.700px; height: 34px; line-height: 33px; margin-top: 6px; font-size: 16.500px; }
.tab.on { background: linear-gradient(#f6faff, #e3eefb); padding: 0 15px; border: 1px solid #a9c4e8; border-bottom: 0; border-radius: 4px 4px 0 0; height: 35px; margin-right: 4px; }
.docbtns { margin-left: auto; padding: 15px 8px 0 0; display: flex; gap: 19px; }
.docbtns svg:first-child { margin-top: -5px; }
.qmark { font: bold 14px "Open Sans", sans-serif; fill: #fff; }
.bili { position: absolute; left: 1541px; top: 33px; z-index: 5; display: flex; opacity: .66; color: #fff; }
.bili span { font: bold 37.500px/44px "Noto Sans CJK SC", sans-serif; margin: 18px 17px 0 0; white-space: nowrap; }

/* ribbon */
.ribbon { height: 148px; flex: none; display: flex; padding: 4px 3px 2px; background: linear-gradient(#dcebfb, #d3e8f9 60%, #d8ecfd); border-bottom: 1px solid #9ab4dc; }
.group { flex: none; border: 1px solid #a9c3e3; border-radius: 3px; box-shadow: 1px 1px 0 #eef6ff; background: linear-gradient(#dde6f0, #cfdcee 22%, #c6d6ea 50%, #d5e6f4); display: flex; flex-direction: column; margin-right: 6px; }
.group .body { flex: 1; display: flex; min-height: 0; }
.group footer { height: 29px; background: #c0d6f0; color: #5f85bd; font-size: 16.700px; line-height: 28px; display: flex; align-items: center; justify-content: center; position: relative; padding-right: 24px; }
.group.g-edit footer { padding-right: 2px; }
.group footer svg { position: absolute; right: 8px; top: 5px; }
.group use { color: #66779a; }
.g-clip { width: 161px; margin-right: 4px; } .g-font { width: 443px; } .g-para { width: 342px; } .g-style { width: 821px; } .g-edit { width: 96px; }
.paste { width: 57px; margin-left: 8px; display: flex; flex-direction: column; align-items: center; padding-top: 4px; }
.paste span { margin: 7px 0 9px; line-height: 24px; font-size: 16.7px; }
.cliplist > div { display: flex; align-items: center; height: 31px; gap: 5px; font-size: 16.5px; white-space: nowrap; }
.g-clip .cliplist { padding-left: 7px; }
.cliplist .dis { color: #9fa8b9; }
.body.cliplist { flex-direction: column; padding-left: 9px; }
.ar { margin-left: 3px; }
.body.rows { flex-direction: column; padding-top: 16px; }
.row { display: flex; align-items: center; height: 32px; }
.r2 { margin-top: 16px; }
.g-font .row { padding-left: 6px; } .g-para .row { padding-left: 5px; gap: 5px; } .g-font .r2 { gap: 6px; }
.combo { background: #f3f8fe; height: 33px; border: 1px solid #c5d5ea; display: flex; align-items: center; justify-content: space-between; color: #1d2735; padding: 0 4px 0 2px; white-space: nowrap; font-size: 17px; }
.c-name { width: 173px; margin-right: 1px; } .c-size { width: 76px; margin-right: 6px; }
.box { height: 30px; border: 1px solid #a3b8d9; border-radius: 3px; background: linear-gradient(#d4dfee, #c6d5ea); display: flex; align-items: center; justify-content: space-around; }
.r1 .bx61 { width: 62px; margin-right: 5px; } .bx33 { width: 33px; } .g-font .r1 .bx33 { margin-right: 6px; } .g-font .last { margin-right: 0; }
.bx257 { width: 258px; justify-content: space-between; padding-right: 4px; } .bx93 { width: 94px; } .bx138 { width: 138px; } .bx62 { width: 62px; } .bx44 { width: 44px; } .bx163 { width: 163px; } .bx94 { width: 94px; }
.g-font .r2 .bx33 { width: 32px; }
.ser { font-family: "Liberation Serif", "Noto Sans CJK SC", serif; color: #1e2633; font-size: 20px; line-height: 26px; }
.s23 { font-size: 22px; } .s18 { font-size: 17px; }
.tri { margin: -14px 0 0 -4px; }
.framed { font-size: 20px; border: 1.500px solid #44506a; width: 22px; height: 25px; line-height: 23px; text-align: center; }
.shaded { font-size: 19px; background: #9fa3a9; width: 20px; height: 24px; line-height: 24px; text-align: center; }
.circ { width: 25px; height: 25px; border: 1.500px solid #1e2633; border-radius: 50%; font-size: 15px; line-height: 22px; text-align: center; color: #1e2633; }
.wen { display: flex; flex-direction: column; align-items: center; width: 26px; }
.wen span { font: bold 10.500px/12px "Open Sans", sans-serif; color: #37445e; }
.wen span + span { font: bold 14px/15px "Noto Sans CJK SC", sans-serif; color: #4a5fc4; }
.bold-on { width: 30px; height: 29px; line-height: 28px; text-align: center; background: linear-gradient(#fbb866, #f49a3d 50%, #ffce69); }
.it { font-style: italic; font-weight: bold; } .un { font-weight: bold; margin-left: 5px; }
s.ser { font-weight: bold; font-size: 17px; }
.sub, .sup { color: #1e2633; font-size: 18px; line-height: 24px; } .sub small, .sup small { font-size: 9px; font-weight: normal; } .sub small { vertical-align: -3px; } .sup small { vertical-align: 9px; }
.aa { font-size: 18px; margin-right: -6px; }
.mini { font: bold 12px "Liberation Serif", serif; fill: #5b6478; } .dk { fill: #2b3548; font-size: 13px; }
.colA { font: bold 20px "Liberation Serif", serif; fill: #4a62a4; }
.azs { display: flex; flex-direction: column; margin-right: -4px; }
.azs span { font: bold 12px/12px "Open Sans", sans-serif; color: #3a4ea8; } .azs span + span { color: #c23a4c; }
.just { width: 31px; height: 30px; display: grid; place-items: center; background: linear-gradient(#f8b05a, #ef941e 50%, #ffe078); }

.gallery { width: 709px; padding: 10px 0 0 12px; margin-top: 2px; display: flex; gap: 10px; height: 84px; border-bottom: 1px solid #b7c9e2; }
.st { width: 91px; height: 69px; flex: none; background: #fff; display: flex; flex-direction: column; align-items: center; overflow: hidden; color: #262626; }
.st.sel { margin: -4px -4px 0; width: 99px; height: 79px; border: 4px solid #f0b550; border-top-color: #b08a4c; border-bottom-color: #ffd873; border-radius: 3px; }
.pv { height: 44px; line-height: 44px; width: 83px; overflow: hidden; white-space: nowrap; color: #111; font-weight: bold; }
.st em { font-size: 16px; line-height: 25px; color: #34406c; white-space: nowrap; }
.pv.p0 { font-size: 16.800px; line-height: 46px; font-weight: normal; } .pv.p1 { font: bold 33px/41px "Open Sans", sans-serif; letter-spacing: -.5px; } .pv.p2 { font: bold 28px/47px "Liberation Serif", serif; } .pv.p3 { font-size: 23px; line-height: 46px; } .pv.p4 { font: bold 25px/48px "Liberation Serif", serif; } .pv.p5 { font-size: 20.800px; line-height: 46px; }
.gscroll { width: 20px; margin: 9px 0 0 6px; }
.gscroll span { height: 24px; border: 1px solid #b9cbe4; display: grid; place-items: center; background: #d7e4f4; }
.change { width: 70px; margin-left: 7px; display: flex; flex-direction: column; align-items: center; padding-top: 5px; font-size: 16.700px; }
.change span { white-space: nowrap; line-height: 24px; margin: 8px 0 9px; }

/* document tabs */
.doctabs { height: 40px; flex: none; background: linear-gradient(#a8c1e8, #b6cff2 40%, #c9defa); border-bottom: 2px solid #3e73aa; display: flex; align-items: flex-end; }
.doctab { width: 127px; height: 33px; background: #f3f8fe; border-right: 2px solid #3d6096; display: flex; align-items: center; gap: 4px; padding: 0 0 3px 8px; font: 600 18.200px "Open Sans", sans-serif; color: #22314e; }
.closer { margin: 0 7px 12px auto; }

/* document map */
.work { height: 731px; flex: none; display: flex; background: #8aaad8; }
.map { width: 382px; display: flex; flex-direction: column; background: #fff; border-right: 2px solid #6c93cc; }
.maphead { height: 39px; flex: none; background: linear-gradient(#dde9fb, #c2d8fc); display: flex; padding: 6px 0 0 7px; position: relative; }
.mapsel { width: 129px; height: 27px; background: #fff; color: #1c1c1c; font-size: 16.8px; line-height: 25px; padding-left: 3px; }
.mapdd { width: 19px; height: 27px; background: #d3def2; display: grid; place-items: center; color: #111; }
.mapx { margin: 5px 11px 0 auto; }
.mapmid { flex: 1; display: flex; position: relative; }
.tree { list-style: none; margin: 0; padding: 6px 0 0; flex: 1; font-size: 16.900px; color: #1a1a1a; }
.tree li { height: 22.500px; display: flex; align-items: center; white-space: nowrap; line-height: 22px; }
.tree .bx, .tree .no { width: 13px; height: 13px; margin-right: 6.500px; flex: none; }
.bx { border: 1px solid #8b8b8b; background: linear-gradient(#555, #555) center / 7px 1px no-repeat; }
.bx.plus { background: linear-gradient(#555, #555) center / 7px 1px no-repeat, linear-gradient(#555, #555) center / 1px 7px no-repeat; }
.l0 { padding-left: 14px; } .l1 { padding-left: 33.500px; } .l2 { padding-left: 52px; }
.tree tt { font: 14.200px "Liberation Mono", monospace; word-spacing: -5px; }
.cur { background: #2b87e3; color: #d6f0ff; }
.vsb { width: 21px; background: linear-gradient(90deg, #8ea9d5, #7593c6); display: flex; flex-direction: column; align-items: center; }
.up { margin: 8px 0; }
.thumb { width: 18px; height: 23px; background: linear-gradient(90deg, #f4f7fc, #d3dcea); border: 1px solid #5e7398; display: grid; place-items: center; }
.down { margin: auto 0 9px; }
.hsb { height: 23px; flex: none; background: linear-gradient(#7c97c9, #87a4d3); display: flex; align-items: center; padding-left: 9px; }
.hthumb { width: 23px; height: 20px; margin-left: 9px; background: linear-gradient(#f4f7fc, #cdd8e9); border: 1px solid #5e7398; display: grid; place-items: center; }
.hr { margin-left: auto; margin-right: 9px; }
.corner { width: 21px; height: 23px; background: #96b5e6; }
.brand { position: absolute; left: 41px; top: 533px; width: 200px; text-align: center; }
.brand b { display: block; font: 900 34.500px/43px "Noto Sans CJK SC", sans-serif; color: #eee; -webkit-text-stroke: 7px #9a9a9a; paint-order: stroke fill; white-space: nowrap; }
.brand .kk { font-size: 42.500px; line-height: 46px; margin-top: -2px; letter-spacing: -.4px; }
.split { width: 12px; background: linear-gradient(90deg, #aad4fb 0 60%, #8fb6e8 60%); }

/* rulers */
.vruler { width: 28px; background: #92b3e2; position: relative; }
.tabstop { position: absolute; left: 0; top: 1px; width: 30px; height: 31px; border: 1px solid #5f87bd; background: #b9d2f4; display: grid; place-items: center; z-index: 2; }
.tabstop i { width: 21px; height: 21px; border: 1px solid #4d6a9a; background: #d8e6f9; font: bold 14px/18px "Open Sans", sans-serif; text-align: center; color: #22304a; }
.vnums { width: 18px; margin: 33px 0 0 4px; height: 698px; background: #fff; overflow: hidden; }
.vnums span { display: grid; place-items: center; height: 58.550px; writing-mode: vertical-rl; transform: rotate(180deg); font: 12.500px "Liberation Sans", sans-serif; color: #4c5260; background: linear-gradient(#6c7484, #6c7484) center 14px / 7px 1.500px no-repeat, linear-gradient(#6c7484, #6c7484) center 43px / 7px 1.500px no-repeat; }
.canvas { width: 1476px; position: relative; background: linear-gradient(#a0c0ec, #8fb0de 22%, #86a9d9 37%, #7398ca 52%, #5d83bc 68%, #5c85c2 82%, #6090d0); display: flex; flex-direction: column; }
.hruler { margin: 7px 0 0 178px; width: 1120px; height: 25px; border-bottom: 9px solid #93b0e0; display: flex; position: relative; flex: none; font: 13px/16px "Liberation Sans", sans-serif; color: #535a68; }
.hruler span { width: 39.300px; flex: none; text-align: center; }
.hm { background: #afcbf3; display: flex; overflow: hidden; }
.hl { width: 169px; } .hl span:first-child { margin-left: -7px; }
.hw { width: 781px; background: #fff; display: flex; padding-left: 20px; overflow: hidden; }
.hrr { width: 170px; } .hrr span:first-child { margin-left: -13px; }
.hrr span:last-child { width: 34px; text-indent: 5px; }
.indent { position: absolute; left: 162px; top: -5px; }
.rindent { position: absolute; left: 941px; top: 1px; }
.page { margin-left: 179px; width: 1117px; height: 699px; background: #fff; box-shadow: 3px 0 3px #41577a, -1px 0 0 #54719e; overflow: hidden; padding: 35px 0 0 169px; color: #3a3a3a; }
.page h1 { margin: 0; height: 108px; font: bold 29.500px/46px "Noto Sans CJK SC", sans-serif; color: #111; white-space: pre; display: flex; }
.page h1 b { font-family: "Open Sans", "Noto Sans CJK SC", sans-serif; font-size: 26px; width: 47px; flex: none; }
.page h1 u { font: 500 28px/52px "Liberation Sans", sans-serif; -webkit-text-stroke: .9px #111; width: 53px; letter-spacing: -.3px; }
.ln { height: 29.250px; font: 300 22.500px/29px "Liberation Sans", "Noto Sans CJK SC", sans-serif; white-space: nowrap; position: relative; }
.ln b { color: #333; font-weight: bold; }
.ln q { quotes: none; color: #aaa; }
.li::before { content: ""; position: absolute; left: -32px; top: 13px; width: 7px; height: 7px; border-radius: 50%; background: #3a3a3a; }
.page u { text-decoration: underline wavy #8f9a90 1px; text-underline-offset: 3px; text-decoration-skip-ink: none; }
.page u.red { text-decoration-color: #f0624f; }
.ibeam { position: absolute; left: 526px; top: 229px; }
.rsb { width: 22px; border-left: 2px solid #b5d6fa; background: #7ea3d4; display: flex; flex-direction: column; }
.rtop { height: 21px; display: grid; place-items: center; background: #aac6ec; }
.rtrack { flex: 1; display: flex; flex-direction: column; align-items: center; justify-content: space-between; padding: 11px 0 7px; background: linear-gradient(90deg, #6489bd, #7aa0d0); }
.rthumb { width: 18px; height: 12px; background: #f2f6fc; border: 1px solid #5d779e; margin-top: 336px; }
.rnav { height: 72px; background: #b4cff3; display: flex; flex-direction: column; align-items: center; justify-content: space-around; }

/* status bar */
.status { height: 31px; flex: none; border-top: 1px solid #5a84b8; background: linear-gradient(#dcebfd, #b9d3f6 45%, #abc8f0 55%, #cfe4fd); display: flex; align-items: center; color: #3a4c74; font-size: 17px; position: relative; }
.status span { height: 30px; display: flex; align-items: center; white-space: nowrap; border-right: 1px solid #a7c1e6; padding-bottom: 3px; }
.s1 { width: 114px; padding-left: 11px; } .s2 { width: 113px; padding-left: 13px; } .s3 { width: 199px; padding-left: 13px; gap: 21px; } .s4 { width: 104px; padding-left: 13px; gap: 24px; }
.views { margin-left: auto; display: flex; width: 131px; height: 25px; border: 1px solid #8aa5cf; background: #bed5f5; margin-right: 10px; }
.views i { flex: 1; display: grid; place-items: center; }
.views .von { background: #fbd89a; }
.status .pct { width: 60px; border: 0; font-size: 17.500px; color: #2e4f96; }
.zoomer { margin: -2px 6px 0 0; }

/* taskbar */
.taskbar { height: 56px; flex: none; border-top: 1px solid #5c6b80; background: linear-gradient(90deg, #7d93b2, #8fa9cc 8%, #9cb7da 20%, #a7c1e3 55%, #a0b9d9 63%, #8195b1 68%, #7d92ab); display: flex; position: relative; padding-left: 14px; }
.orb { margin: 4px 21px 0 0; }
.tb { width: 83px; height: 55px; margin-right: 4.300px; border: 1px solid #56677f; border-radius: 3px; box-shadow: inset 0 0 0 1px #dbe5f3; background: linear-gradient(135deg, #d7e0ee, #b3c5df 50%, #a9bedb); display: grid; place-items: center; flex: none; }
.bare { background: none; border: 0; box-shadow: none; }
.stack { width: 73px; margin-right: 14.300px; box-shadow: inset 0 0 0 1px #dbe5f3, 5px 0 0 -1px #a9bedb, 6px 0 0 -1px #56677f, 10px 0 0 -1px #a9bedb, 11px 0 0 -1px #56677f; }
.hot { background: linear-gradient(135deg, #f3f6fb, #ccd8ea 50%, #c3d2e8); }
.cmd { width: 42px; height: 36px; border: 1px solid #c8ccd2; border-top-width: 4px; background: #050505; color: #f0f0f0; font: bold 13px/18px "Liberation Mono", monospace; padding-left: 4px; }
.tray { position: absolute; left: 1266px; top: 2px; height: 52px; display: flex; align-items: center; }
.tray > * { margin-left: 11.900px; }
.tray > :nth-child(n+6):nth-child(-n+9) { margin-left: 13.200px; }
.tray .ch { margin-left: 0; font: 17px/22px "Liberation Mono", monospace; letter-spacing: -1px; width: 19px; color: #fff; margin-top: -6px; }
.tray .help { margin-top: -5px; }
.tray .opt { margin-top: -12px; margin-right: 3px; }
.clock { position: absolute; left: 1790px; width: 112px; top: 4px; color: #fff; font-size: 17.500px; line-height: 25px; display: flex; flex-direction: column; align-items: center; }
.peek { position: absolute; right: 0; top: 0; width: 19px; height: 56px; border: 1px solid #45556b; background: linear-gradient(90deg, #9aa9bc, #68798f); }
```
